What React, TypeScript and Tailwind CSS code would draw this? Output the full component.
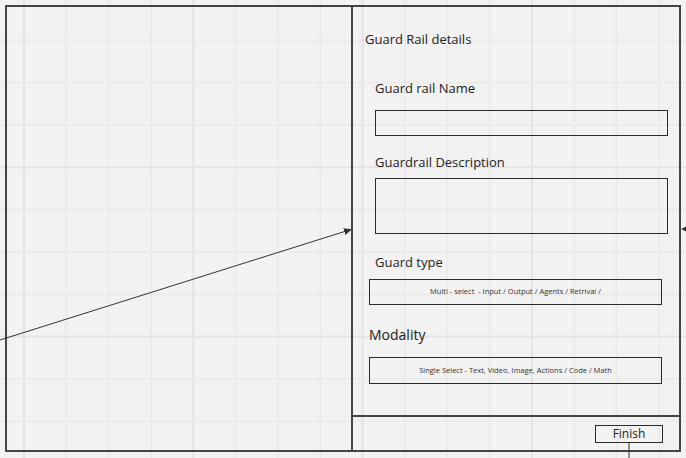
import React from 'react';

const font = 'font-["Open_Sans",sans-serif]';

function Label({ children, className }: { children: React.ReactNode; className: string }) {
  return <div className={`text-[13px] leading-[18px] text-[#222] ${className}`}>{children}</div>;
}

function Box({ children, className }: { children?: React.ReactNode; className: string }) {
  return (
    <div
      className={`flex w-[293px] items-center justify-center border border-[#2a2a2a] text-[7.5px] text-[#333] ${className}`}
    >
      {children}
    </div>
  );
}

function Connectors() {
  return (
    <svg className="pointer-events-none absolute inset-0" width={686} height={458}>
      <defs>
        <marker id="head" markerWidth="8" markerHeight="8" refX="7" refY="4" orient="auto" markerUnits="userSpaceOnUse">
          <path d="M0,0.5 L8,4 L0,7.5 Z" fill="#333" />
        </marker>
      </defs>
      <line x1={0} y1={340} x2={351} y2={229.5} stroke="#333" strokeWidth={1} markerEnd="url(#head)" />
      <path d="M681,229 L688,225.5 L688,232.5 Z" fill="#333" />
      <line x1={629} y1={443} x2={629} y2={458} stroke="#333" strokeWidth={1} />
    </svg>
  );
}

export default function App() {
  return (
    <div
      className={`relative h-[458px] w-[686px] overflow-hidden bg-[#f2f2f2] pl-[5px] pt-[5px] ${font} [background-image:linear-gradient(to_right,#e4e4e4_2px,transparent_2px),linear-gradient(to_bottom,#e4e4e4_2px,transparent_2px),linear-gradient(to_right,#ebebeb_2px,transparent_2px),linear-gradient(to_bottom,#ebebeb_2px,transparent_2px)] [background-size:169.33px_169.33px,169.33px_169.33px,42.33px_42.33px,42.33px_42.33px] [background-position:23px_-3px,23px_-3px,23px_-3px,23px_-3px]`}
    >
      <div className="flex h-[447px] w-[676px] border-2 border-[#444]">
        <div className="w-[346px] border-r-2 border-[#444]" />

        <div className="flex flex-1 flex-col">
          <div className="flex flex-1 flex-col">
            <Label className="ml-[12px] mt-[23px]">Guard Rail details</Label>
            <Label className="ml-[22px] mt-[31px]">Guard rail Name</Label>
            <Box className="ml-[22px] mt-[13px] h-[26px]" />
            <Label className="ml-[22px] mt-[17px]">Guardrail Description</Label>
            <Box className="ml-[22px] mt-[7px] h-[56px]" />
            <Label className="ml-[22px] mt-[19px]">Guard type</Label>
            <Box className="ml-[16px] mt-[8px] h-[26px]">Multi - select &nbsp;- Input / Output / Agents / Retrival /</Box>
            <div className="ml-[16px] mt-[20px] text-[14px] leading-[20px] text-[#222]">Modality</div>
            <Box className="ml-[16px] mt-[12px] h-[27px]">Single Select - Text, Video, Image, Actions / Code / Math</Box>
          </div>

          <div className="flex h-[35px] items-start justify-end border-t-2 border-[#444] pr-[16px] pt-[8px]">
            <div className="flex h-[18px] w-[68px] items-center justify-center border border-[#2a2a2a] text-[12px] leading-none text-[#222]">
              Finish
            </div>
          </div>
        </div>
      </div>

      <Connectors />
    </div>
  );
}
